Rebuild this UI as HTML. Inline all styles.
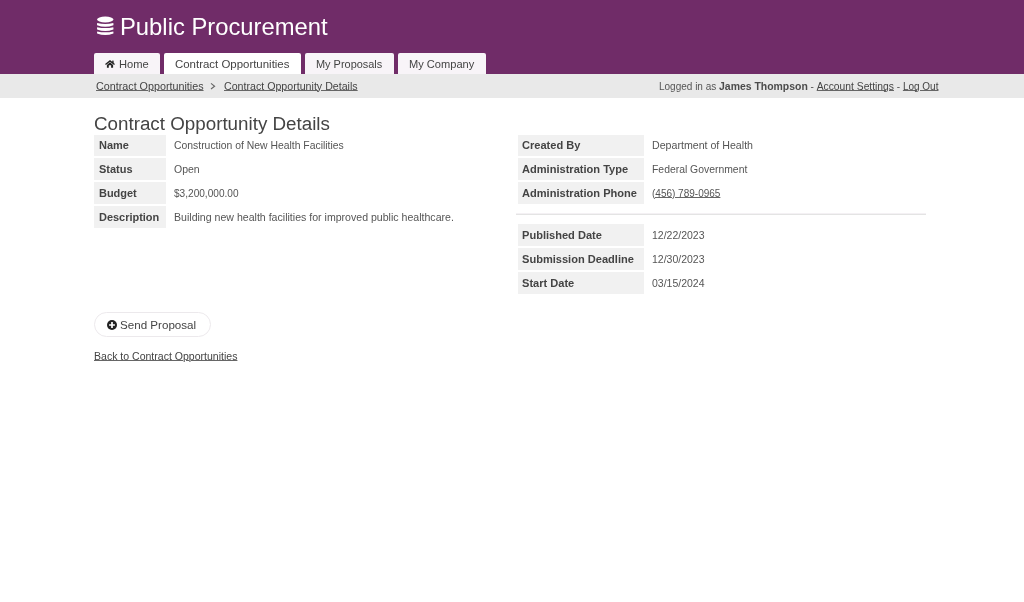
<!DOCTYPE html>
<html><head><meta charset="utf-8">
<style>
html,body{margin:0;padding:0;width:1024px;height:602px;overflow:hidden;background:#fff;}
body{font-family:"Liberation Sans",sans-serif;color:#555;position:relative;}
.a,.lt,.vt{will-change:transform;}
.a{position:absolute;white-space:nowrap;}
#hdr{position:absolute;left:0;top:0;width:1024px;height:74px;background:#702c68;}
.tab{position:absolute;top:53px;height:21px;background:#f8f4f8;border-radius:2px 2px 0 0;}
.tab.act{background:#fff;}
#bc{position:absolute;left:0;top:74px;width:1024px;height:24px;background:#e9e9e9;}
a,.u{color:#444;text-decoration:underline;text-decoration-thickness:1px;text-underline-offset:0px;text-decoration-color:#666;}
.lbl{position:absolute;background:#f1f1f1;height:22px;}
.lt{position:absolute;font-weight:bold;color:#444;white-space:nowrap;margin-top:-0.5px;}
.vt{position:absolute;color:#555;white-space:nowrap;}
</style></head>
<body>
<div id="hdr"></div>
<!-- database icon -->
<svg class="a" style="left:96px;top:16px" width="19" height="21" viewBox="0 0 19 21">
  <ellipse cx="9.25" cy="3.5" rx="8.25" ry="2.9" fill="#fff"/>
  <path d="M1.2 7.0 Q9.25 8.8 17.3 7.0 Q17.6 8.2 17.4 9.2 Q9.25 12.2 1.1 9.2 Q0.9 8.2 1.2 7.0 Z" fill="#fff"/>
  <path d="M1.2 11.2 Q9.25 13.0 17.3 11.2 Q17.6 12.4 17.4 13.4 Q9.25 16.4 1.1 13.4 Q0.9 12.4 1.2 11.2 Z" fill="#fff"/>
  <path d="M1.2 15.4 Q9.25 17.2 17.3 15.4 Q17.6 16.6 17.4 17.6 Q9.25 20.6 1.1 17.6 Q0.9 16.6 1.2 15.4 Z" fill="#fff"/>
</svg>
<div class="a" style="left:120px;top:15px;font-size:23.8px;line-height:24px;color:#fff">Public Procurement</div>

<div class="tab" style="left:94px;width:66px"></div>
<div class="tab act" style="left:164px;width:137px"></div>
<div class="tab" style="left:305px;width:89px"></div>
<div class="tab" style="left:398px;width:87.5px"></div>
<svg class="a" style="left:105px;top:59.5px" width="10" height="9" viewBox="0 0 10 9">
  <polyline points="0.5,4.6 5,0.9 9.5,4.6" fill="none" stroke="#222" stroke-width="1.3"/>
  <rect x="7.2" y="0.6" width="1.4" height="2.4" fill="#222"/>
  <path d="M1.9 4.9 L5 2.3 L8.1 4.9 V7.7 H6.1 V5.3 H3.8 V7.7 H1.9 Z" fill="#222"/>
</svg>
<div class="a" style="left:118.5px;top:58.5px;font-size:11.17px;line-height:11px;color:#444">Home</div>
<div class="a" style="left:175px;top:58.5px;font-size:11.45px;line-height:11px;color:#444">Contract Opportunities</div>
<div class="a" style="left:316px;top:58.5px;font-size:10.94px;line-height:11px;color:#444">My Proposals</div>
<div class="a" style="left:409px;top:58.5px;font-size:11.09px;line-height:11px;color:#444">My Company</div>

<div id="bc"></div>
<div class="a u" style="left:96px;top:81px;font-size:10.75px;line-height:11px">Contract Opportunities</div>
<svg class="a" style="left:209px;top:82px" width="8" height="8" viewBox="0 0 8 8"><polyline points="2,1.4 5.6,4.2 2,7" fill="none" stroke="#666" stroke-width="1.1"/></svg>
<div class="a u" style="left:223.5px;top:81px;font-size:10.65px;line-height:11px">Contract Opportunity Details</div>
<div class="a" style="left:658.5px;top:81px;font-size:10px;line-height:11px;color:#555">Logged in as <b style="font-size:10.44px;color:#4c4c4c">James Thompson</b> - <span class="u" style="font-size:10.3px">Account Settings</span> - <span class="u" style="font-size:10.0px">Log Out</span></div>

<div class="a" style="left:94px;top:114px;font-size:18.8px;line-height:19px;color:#444">Contract Opportunity Details</div>

<div class="lbl" style="left:94px;top:135px;height:21px;width:72px"></div>
<div class="lbl" style="left:94px;top:158px;width:72px"></div>
<div class="lbl" style="left:94px;top:182px;width:72px"></div>
<div class="lbl" style="left:94px;top:206px;width:72px"></div>
<div class="lt" style="left:98.5px;top:140px;font-size:10.98px;line-height:11px">Name</div>
<div class="lt" style="left:98.5px;top:164px;font-size:10.98px;line-height:11px">Status</div>
<div class="lt" style="left:98.5px;top:188px;font-size:10.98px;line-height:11px">Budget</div>
<div class="lt" style="left:98.5px;top:212px;font-size:10.96px;line-height:11px">Description</div>
<div class="vt" style="left:173.5px;top:140px;font-size:10.4px;line-height:11px">Construction of New Health Facilities</div>
<div class="vt" style="left:173.5px;top:164px;font-size:10.5px;line-height:11px">Open</div>
<div class="vt" style="left:173.5px;top:188px;font-size:10.1px;line-height:11px">$3,200,000.00</div>
<div class="vt" style="left:173.5px;top:212px;font-size:10.58px;line-height:11px">Building new health facilities for improved public healthcare.</div>

<div class="lbl" style="left:518px;top:135px;height:21px;width:126px"></div>
<div class="lbl" style="left:518px;top:158px;width:126px"></div>
<div class="lbl" style="left:518px;top:182px;width:126px"></div>
<div class="lt" style="left:522px;top:140px;font-size:11.07px;line-height:11px">Created By</div>
<div class="lt" style="left:522px;top:164px;font-size:11.07px;line-height:11px">Administration Type</div>
<div class="lt" style="left:522px;top:188px;font-size:11.07px;line-height:11px">Administration Phone</div>
<div class="vt" style="left:651.5px;top:140px;font-size:10.64px;line-height:11px">Department of Health</div>
<div class="vt" style="left:651.5px;top:164px;font-size:10.4px;line-height:11px">Federal Government</div>
<div class="vt u" style="left:651.5px;top:188px;font-size:10px;line-height:11px">(456) 789-0965</div>

<div class="a" style="left:516px;top:213px;width:409.6px;height:1px;background:#f4f1f4"></div><div class="a" style="left:516px;top:214px;width:409.6px;height:1px;background:#e4e4e4"></div>

<div class="lbl" style="left:518px;top:224px;width:126px"></div>
<div class="lbl" style="left:518px;top:248px;width:126px"></div>
<div class="lbl" style="left:518px;top:272px;width:126px"></div>
<div class="lt" style="left:522px;top:230px;font-size:11.07px;line-height:11px">Published Date</div>
<div class="lt" style="left:522px;top:254px;font-size:11.07px;line-height:11px">Submission Deadline</div>
<div class="lt" style="left:522px;top:278px;font-size:11.07px;line-height:11px">Start Date</div>
<div class="vt" style="left:651.5px;top:230px;font-size:10.5px;line-height:11px">12/22/2023</div>
<div class="vt" style="left:651.5px;top:254px;font-size:10.5px;line-height:11px">12/30/2023</div>
<div class="vt" style="left:651.5px;top:278px;font-size:10.5px;line-height:11px">03/15/2024</div>

<div class="a" style="left:93.7px;top:312px;width:114.8px;height:23.4px;border:1px solid #ece9ec;border-radius:13px;background:#fff"></div>
<svg class="a" style="left:107px;top:320px" width="10" height="10" viewBox="0 0 10 10">
  <circle cx="5" cy="5" r="5" fill="#222"/>
  <path d="M4.15 2.1 H5.85 V4.15 H7.9 V5.85 H5.85 V7.9 H4.15 V5.85 H2.1 V4.15 H4.15 Z" fill="#fff"/>
</svg>
<div class="a" style="left:120px;top:319px;font-size:11.62px;line-height:11px;color:#444">Send Proposal</div>

<div class="a u" style="left:94px;top:351px;font-size:10.54px;line-height:11px">Back to Contract Opportunities</div>
</body></html>
